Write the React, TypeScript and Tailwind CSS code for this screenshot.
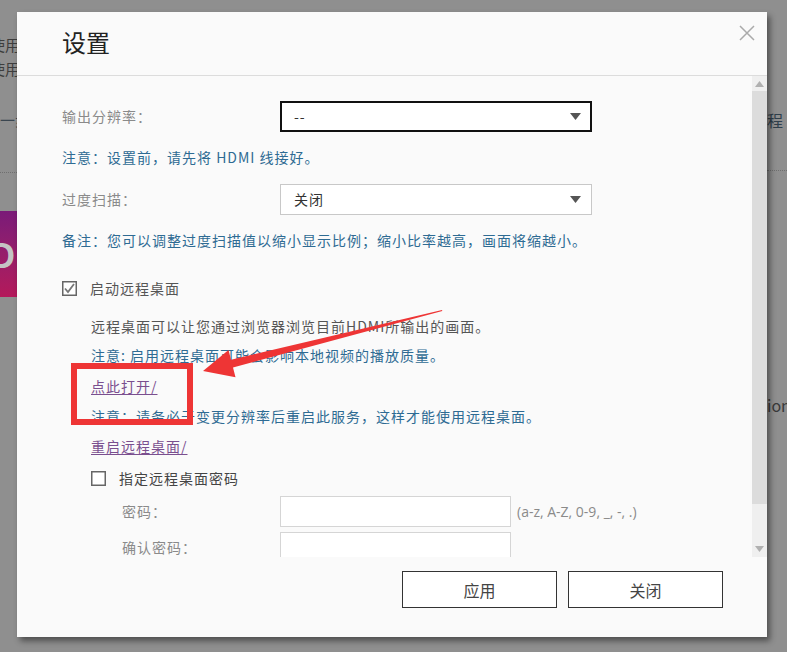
import React from "react";

const font = { fontFamily: '"Noto Sans CJK SC", "Noto Sans", sans-serif' };

function Caret() {
  return (
    <svg width="11" height="7" viewBox="0 0 11 7" className="shrink-0">
      <path d="M0 0 L11 0 L5.5 7 Z" fill="#555" />
    </svg>
  );
}

function CheckBox({ checked }: { checked?: boolean }) {
  return (
    <svg width="15" height="15" viewBox="0 0 15 15" className="shrink-0">
      <rect x="0.75" y="0.75" width="13.5" height="13.5" fill="#fff" stroke="#666" strokeWidth="1.5" />
      {checked && <path d="M3 7.5 L6 11 L12 3" fill="none" stroke="#777" strokeWidth="1.8" />}
    </svg>
  );
}

export default function App() {
  return (
    <div className="relative w-[787px] h-[652px] overflow-hidden bg-[#8f8f8f]" style={font}>
      {/* background page fragments */}
      <div className="flex h-full justify-between">
        <div className="w-[17px] flex flex-col text-[15px] text-[#3d3d3d] overflow-hidden">
          <div className="mt-[33px] leading-[24px] whitespace-nowrap -ml-[10px]">使用</div>
          <div className="leading-[24px] whitespace-nowrap -ml-[10px]">使用</div>
          <div className="mt-[27px] leading-[24px] whitespace-nowrap text-[#3a4650]">一步</div>
          <div className="mt-[40px] w-full border-t border-dotted border-[#6f6f6f]"></div>
          <div className="mt-[38px] w-[17px] h-[86px] bg-gradient-to-b from-[#7a1a78] to-[#b4185a] flex items-center overflow-hidden">
            <span className="text-[34px] font-bold text-[#c4c4c4] -ml-[9px] leading-none">D</span>
          </div>
        </div>
        <div className="w-[20px] flex flex-col text-[16px] text-[#2f3f4c] overflow-hidden">
          <div className="mt-[108px] leading-[24px] whitespace-nowrap">程</div>
          <div className="mt-[38px] w-full border-t border-dotted border-[#6f6f6f]"></div>
          <div className="mt-[222px] leading-[24px] whitespace-nowrap text-[#3a3a3a]">ion</div>
        </div>
      </div>

      {/* modal */}
      <div className="absolute left-[17px] top-[12px] w-[750px] h-[625px] bg-[#fafafa] flex flex-col shadow-[3px_4px_6px_rgba(0,0,0,0.45)]">
        <div className="h-[64px] shrink-0 border-b border-[#dcdcdc] flex items-start justify-between">
          <div className="ml-[45px] mt-[14px] text-[24px] leading-[32px] text-[#222]">设置</div>
          <svg width="16" height="16" viewBox="0 0 16 16" className="mt-[13px] mr-[12px]">
            <path d="M1 1 L15 15 M15 1 L1 15" stroke="#aaa" strokeWidth="1.5" />
          </svg>
        </div>
        <div className="h-[481px] shrink-0 flex">
          <div className="flex-1 overflow-hidden pl-[45px] text-[14px] tracking-[1px]">
            {/* row 1 */}
            <div className="mt-[25px] flex items-center">
              <div className="w-[218px] text-[#8a8a8a]">输出分辨率：</div>
              <div className="w-[312px] h-[31px] border-2 border-[#111] bg-white flex items-center justify-between pl-[12px] pr-[9px] text-[#333]">
                <span>--</span>
                <Caret />
              </div>
            </div>
            <div className="mt-[15px] leading-[20px] text-[#2e6b93]">注意：设置前，请先将 HDMI 线接好。</div>
            <div className="mt-[17px] flex items-center">
              <div className="w-[218px] text-[#8a8a8a]">过度扫描：</div>
              <div className="w-[312px] h-[31px] border border-[#c8c8c8] bg-white flex items-center justify-between pl-[13px] pr-[10px] text-[#333]">
                <span>关闭</span>
                <Caret />
              </div>
            </div>
            <div className="mt-[15px] leading-[20px] text-[#2e6b93]">备注：您可以调整过度扫描值以缩小显示比例；缩小比率越高，画面将缩越小。</div>
            <div className="mt-[28px] h-[20px] flex items-center gap-[13px] leading-[20px]">
              <CheckBox checked />
              <span className="text-[#555]">启动远程桌面</span>
            </div>
            <div className="pl-[29px]">
              <div className="mt-[18px] leading-[20px] text-[#555]">远程桌面可以让您通过浏览器浏览目前HDMI所输出的画面。</div>
              <div className="mt-[9px] leading-[20px] text-[#2e6b93]">注意: 启用远程桌面可能会影响本地视频的播放质量。</div>
              <div className="mt-[11px] leading-[20px]">
                <span className="text-[#7a4f8f] underline underline-offset-2">点此打开/</span>
              </div>
              <div className="mt-[10px] leading-[20px] text-[#2e6b93]">注意：请务必于变更分辨率后重启此服务，这样才能使用远程桌面。</div>
              <div className="mt-[10px] leading-[20px]">
                <span className="text-[#7a4f8f] underline underline-offset-2">重启远程桌面/</span>
              </div>
              <div className="mt-[12px] h-[20px] flex items-center gap-[13px] leading-[20px]">
                <CheckBox />
                <span className="text-[#444]">指定远程桌面密码</span>
              </div>
            </div>
            <div className="mt-[8px] flex items-center">
              <div className="w-[218px] pl-[60px] text-[#8a8a8a]">密码：</div>
              <div className="w-[231px] h-[31px] border border-[#d5d5d5] bg-white"></div>
              <div className="ml-[6px] text-[#8a8a8a] tracking-normal text-[14px]" style={{ fontFamily: '"Open Sans", "Noto Sans", sans-serif' }}>(a-z, A-Z, 0-9, _, -, .)</div>
            </div>
            <div className="mt-[5px] flex items-center">
              <div className="w-[218px] pl-[60px] text-[#8a8a8a]">确认密码：</div>
              <div className="w-[231px] h-[31px] border border-[#d5d5d5] bg-white"></div>
            </div>
          </div>
          <div className="w-[15px] bg-[#efefef] flex flex-col items-center">
            <svg width="9" height="6" viewBox="0 0 9 6" className="mt-[5px]">
              <path d="M0 6 L9 6 L4.5 0 Z" fill="#b0b0b0" />
            </svg>
            <div className="mt-[4px] w-full h-[413px] bg-[#dcdcdc]"></div>
            <div className="flex-1"></div>
            <svg width="9" height="6" viewBox="0 0 9 6" className="mb-[5px]">
              <path d="M0 0 L9 0 L4.5 6 Z" fill="#b0b0b0" />
            </svg>
          </div>
        </div>
        <div className="flex justify-end gap-[11px] pr-[44px] pt-[14px]">
          <button className="w-[155px] h-[37px] border-[1.5px] border-[#333] bg-white text-[16px] text-[#444]">应用</button>
          <button className="w-[155px] h-[37px] border-[1.5px] border-[#333] bg-white text-[16px] text-[#444]">关闭</button>
        </div>
      </div>

      {/* red annotation */}
      <div className="absolute left-[71px] top-[363px] w-[122px] h-[62px] border-[6px] border-[#ee3535]"></div>
      <svg className="absolute left-0 top-0" width="787" height="652" viewBox="0 0 787 652">
        <polygon
          points="203,371 228.5,350 231,359.7 442,310 442.3,311 233,367.5 235.5,377.2"
          fill="#ee3535"
        />
      </svg>
    </div>
  );
}
